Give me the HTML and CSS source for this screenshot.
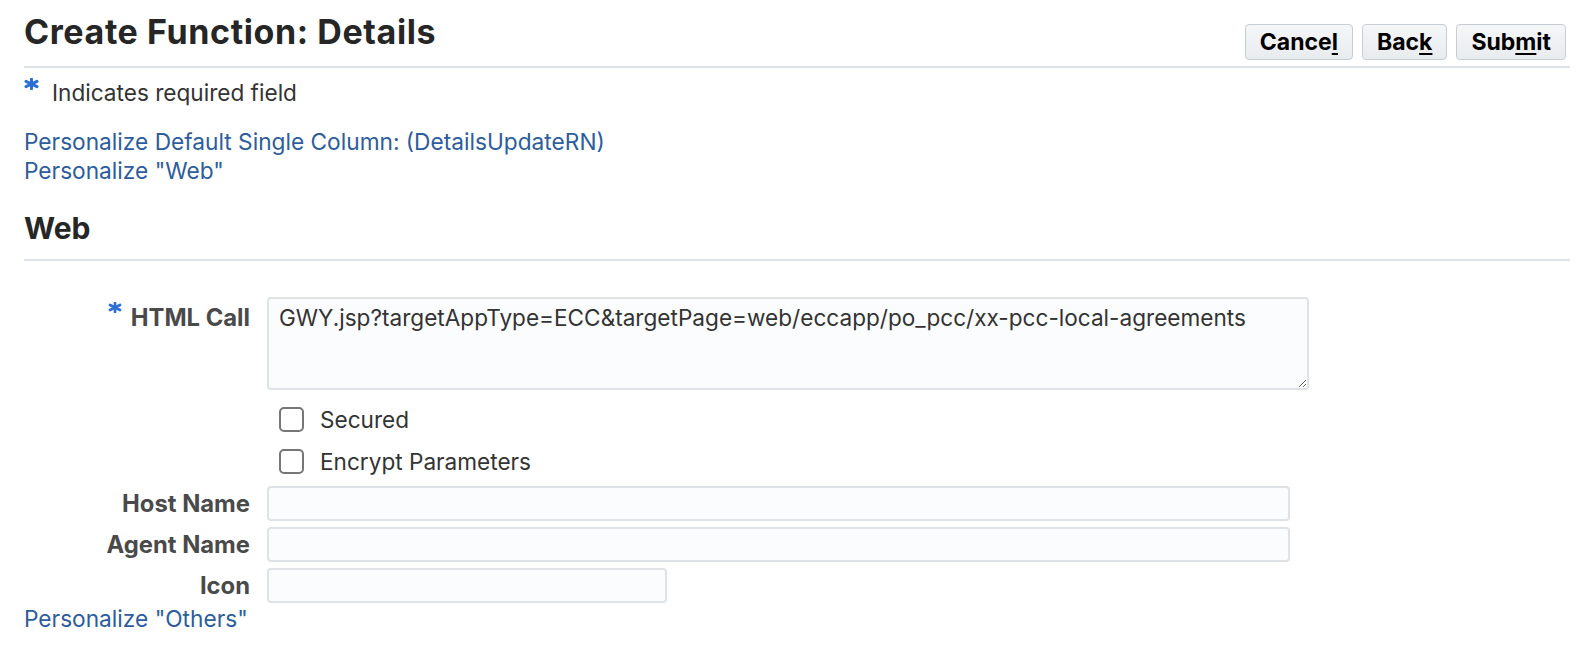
FILE: index.html
```html
<!DOCTYPE html>
<html lang="en">
<head>
<meta charset="utf-8">
<title>Create Function: Details</title>
<link rel="stylesheet" href="styles.css">
</head>
<body>
<div class="page">
  <header class="page-header">
    <h1 class="page-title">Create Function: Details</h1>
    <div class="actions">
      <button class="btn" type="button">Cance<u>l</u></button>
      <button class="btn" type="button">Bac<u>k</u></button>
      <button class="btn" type="button">Sub<u>m</u>it</button>
    </div>
  </header>

  <div class="required-note">
    <svg class="req-star" viewBox="0 0 15 12" width="15" height="12" aria-hidden="true"><g stroke="#2d6fd3" stroke-width="3" stroke-linecap="round"><line x1="7.5" y1="1.2" x2="7.5" y2="10.8"/><line x1="2" y1="3.3" x2="13" y2="8.7"/><line x1="2" y1="8.7" x2="13" y2="3.3"/></g></svg>
    <span>Indicates required field</span>
  </div>

  <div class="links">
    <a class="link" href="#">Personalize Default Single Column: (DetailsUpdateRN)</a>
    <a class="link" href="#">Personalize "Web"</a>
  </div>

  <h2 class="section-title">Web</h2>

  <div class="form">
    <div class="label label-top">
      <svg class="req-star small" viewBox="0 0 15 12" width="14" height="11" aria-hidden="true"><g stroke="#2d6fd3" stroke-width="3" stroke-linecap="round"><line x1="7.5" y1="1.2" x2="7.5" y2="10.8"/><line x1="2" y1="3.3" x2="13" y2="8.7"/><line x1="2" y1="8.7" x2="13" y2="3.3"/></g></svg>
      <span>HTML Call</span>
    </div>
    <textarea class="textarea" spellcheck="false">GWY.jsp?targetAppType=ECC&amp;targetPage=web/eccapp/po_pcc/xx-pcc-local-agreements</textarea>

    <div></div>
    <label class="check first"><input type="checkbox" class="box"><span>Secured</span></label>

    <div></div>
    <label class="check"><input type="checkbox" class="box"><span>Encrypt Parameters</span></label>

    <div class="label gap-top">Host Name</div>
    <input class="field wide gap-top" type="text">

    <div class="label">Agent Name</div>
    <input class="field wide" type="text">

    <div class="label">Icon</div>
    <input class="field narrow" type="text">
  </div>

  <a class="link others" href="#">Personalize "Others"</a>
</div>
</body>
</html>
```

FILE: styles.css
```css
html, body {
  margin: 0;
  padding: 0;
  background: #ffffff;
}

body {
  font-family: Inter, "Liberation Sans", Arial, sans-serif;
  color: #333333;
}

.page {
  padding: 0 22px 0 24px;
}

.page-header {
  display: flex;
  justify-content: space-between;
  align-items: flex-start;
  height: 68px;
  box-sizing: border-box;
  border-bottom: 2px solid #dde3e8;
}

.page-title {
  margin: 12px 0 0;
  font-size: 34px;
  line-height: 40px;
  font-weight: 700;
  color: #262626;
  letter-spacing: 0.6px;
}

.actions {
  display: flex;
  gap: 9px;
  margin: 24px 4px 0 0;
}

.btn {
  height: 36px;
  padding: 0 14px;
  font-family: Inter, "Liberation Sans", Arial, sans-serif;
  font-size: 23px;
  font-weight: 700;
  line-height: 1;
  color: #000000;
  background: linear-gradient(#f4f6f8, #e9ecef);
  border: 1.5px solid #c6cdd4;
  border-radius: 4px;
}

.btn u {
  text-underline-offset: 3px;
  text-decoration-thickness: 2px;
}

.required-note {
  display: flex;
  align-items: flex-start;
  gap: 13px;
  margin-top: 11px;
  font-size: 22.6px;
  line-height: 28px;
  color: #333333;
}

.req-star {
  display: block;
  flex: none;
  margin-top: -1px;
}

.links {
  margin-top: 21px;
  display: flex;
  flex-direction: column;
  align-items: flex-start;
}

.link {
  font-size: 22.7px;
  line-height: 28.5px;
  color: #2c5d9c;
  text-decoration: none;
}

.section-title {
  margin: 25px 0 0;
  padding-bottom: 13px;
  font-size: 30px;
  line-height: 36px;
  font-weight: 700;
  color: #262626;
  border-bottom: 2px solid #dde3e8;
}

.form {
  display: grid;
  grid-template-columns: 226px auto;
  column-gap: 17px;
  row-gap: 6px;
  align-items: center;
  justify-items: start;
  margin-top: 36px;
}

.label {
  justify-self: end;
  display: flex;
  align-items: flex-start;
  gap: 9px;
  font-size: 23.8px;
  line-height: 28px;
  font-weight: 700;
  color: #4a4a4a;
}

.label-top {
  align-self: start;
  padding-top: 7px;
}

.req-star.small {
  margin-top: -2px;
}

.textarea {
  width: 1042px;
  height: 93px;
  box-sizing: border-box;
  padding: 5px 10px;
  font-family: Inter, "Liberation Sans", Arial, sans-serif;
  font-size: 22.6px;
  line-height: 28px;
  color: #333333;
  background: #fbfcfd;
  border: 2px solid #dfe3e7;
  border-radius: 4px;
  resize: both;
  outline: none;
}

.check {
  display: flex;
  align-items: center;
  gap: 16px;
  height: 25px;
  margin-left: 12px;
  margin-top: 11px;
  font-size: 22.6px;
  color: #333333;
}

.check.first {
  margin-top: 11px;
}

.box {
  appearance: none;
  -webkit-appearance: none;
  margin: 0;
  width: 25px;
  height: 25px;
  box-sizing: border-box;
  border: 2px solid #767676;
  border-radius: 5px;
  background: #ffffff;
}

.field {
  height: 35px;
  box-sizing: border-box;
  margin: 0;
  padding: 0 10px;
  font-family: Inter, "Liberation Sans", Arial, sans-serif;
  font-size: 22.6px;
  background: #fbfcfd;
  border: 2px solid #dfe3e7;
  border-radius: 4px;
  outline: none;
}

.field.wide {
  width: 1023px;
}

.field.narrow {
  width: 400px;
}

.gap-top {
  margin-top: 6px;
}

.others {
  display: inline-block;
  margin-top: 2px;
}
```
